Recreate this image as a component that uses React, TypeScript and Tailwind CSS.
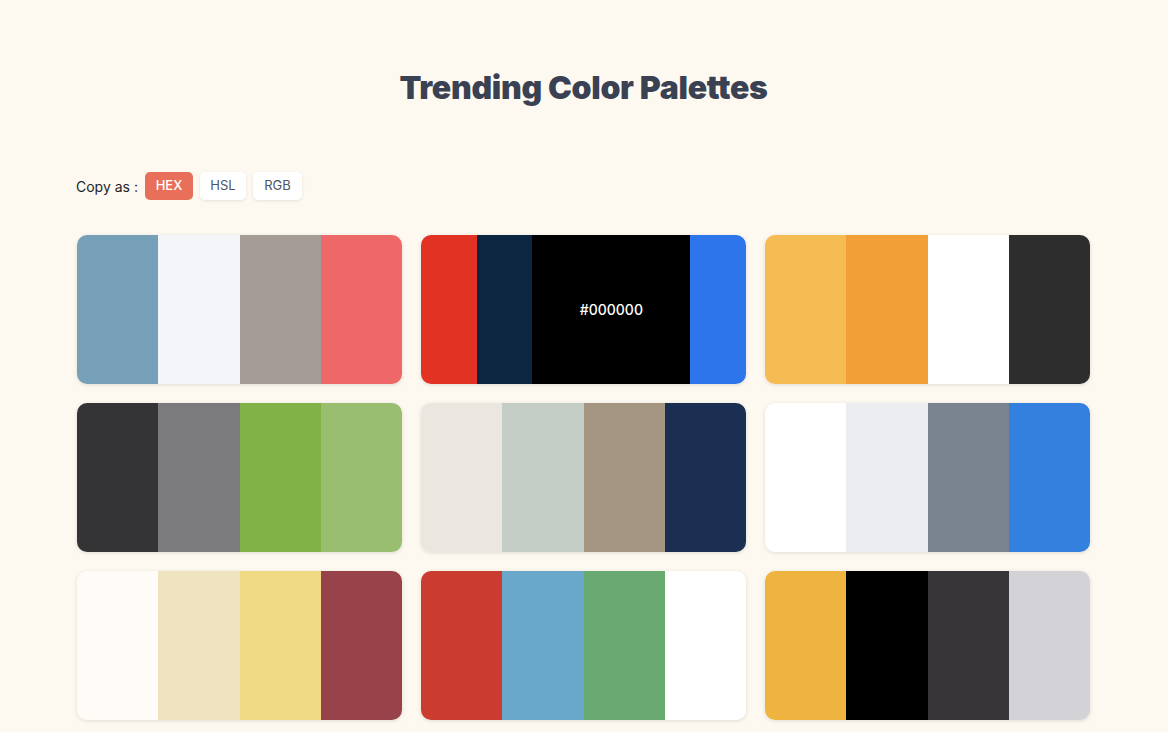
const palettes: { colors: string[]; active?: number }[] = [
  { colors: ["#769fb8", "#f3f5f8", "#a59c98", "#ee6869"] },
  { colors: ["#e13223", "#0c2641", "#000000", "#2d75ea"], active: 2 },
  { colors: ["#f4bc52", "#f29f38", "#ffffff", "#2d2d2d"] },
  { colors: ["#343436", "#7b7b7d", "#80b248", "#9abe70"] },
  { colors: ["#eae7e1", "#c4cdc6", "#a59682", "#1b2f53"] },
  { colors: ["#ffffff", "#ecedf1", "#7a8490", "#3480de"] },
  { colors: ["#fffcf7", "#f0e3c0", "#f0da85", "#984249"] },
  { colors: ["#c93c2f", "#6aa8ca", "#69aa73", "#ffffff"] },
  { colors: ["#efb43f", "#000000", "#373538", "#d3d2d7"] },
];

function Palette({ colors, active }: { colors: string[]; active?: number }) {
  return (
    <div className="flex h-[149px] overflow-hidden rounded-[10px] shadow-[0_1px_4px_rgba(0,0,0,0.12)]">
      {colors.map((c, i) => (
        <div
          key={i}
          className={
            i === active
              ? "flex grow-[2.84] basis-0 items-center justify-center"
              : "flex grow basis-0 items-center justify-center"
          }
          style={{ backgroundColor: c }}
        >
          {i === active && (
            <span className="text-[14px] font-medium text-white">{c.toUpperCase()}</span>
          )}
        </div>
      ))}
    </div>
  );
}

export default function App() {
  return (
    <div className="min-h-[732px] bg-[#fdf9f1] font-['Inter',sans-serif] text-[#1f2937]">
      <div className="ml-[77px] w-[1013px] pt-[64px]">
        <h1 className="text-center text-[32px] font-black tracking-[-0.3px] text-[#3a4152]">
          Trending Color Palettes
        </h1>

        {/* copy format switch */}
        <div className="mt-[60px] flex items-center gap-[7px]">
          <span className="-ml-[1px] text-[14px] text-[#1f1f1f]">Copy as :</span>
          <button className="h-[28px] w-[48px] rounded-[5px] bg-[#e8705a] text-[13px] font-medium text-white">
            HEX
          </button>
          <button className="h-[28px] w-[46px] rounded-[5px] bg-white text-[13px] text-[#4b5563] shadow-[0_1px_3px_rgba(0,0,0,0.1)]">
            HSL
          </button>
          <button className="h-[28px] w-[49px] rounded-[5px] bg-white text-[13px] text-[#4b5563] shadow-[0_1px_3px_rgba(0,0,0,0.1)]">
            RGB
          </button>
        </div>

        <div className="mt-[35px] grid grid-cols-3 gap-x-[19px] gap-y-[19px]">
          {palettes.map((p, i) => (
            <Palette key={i} colors={p.colors} active={p.active} />
          ))}
        </div>
      </div>
    </div>
  );
}
